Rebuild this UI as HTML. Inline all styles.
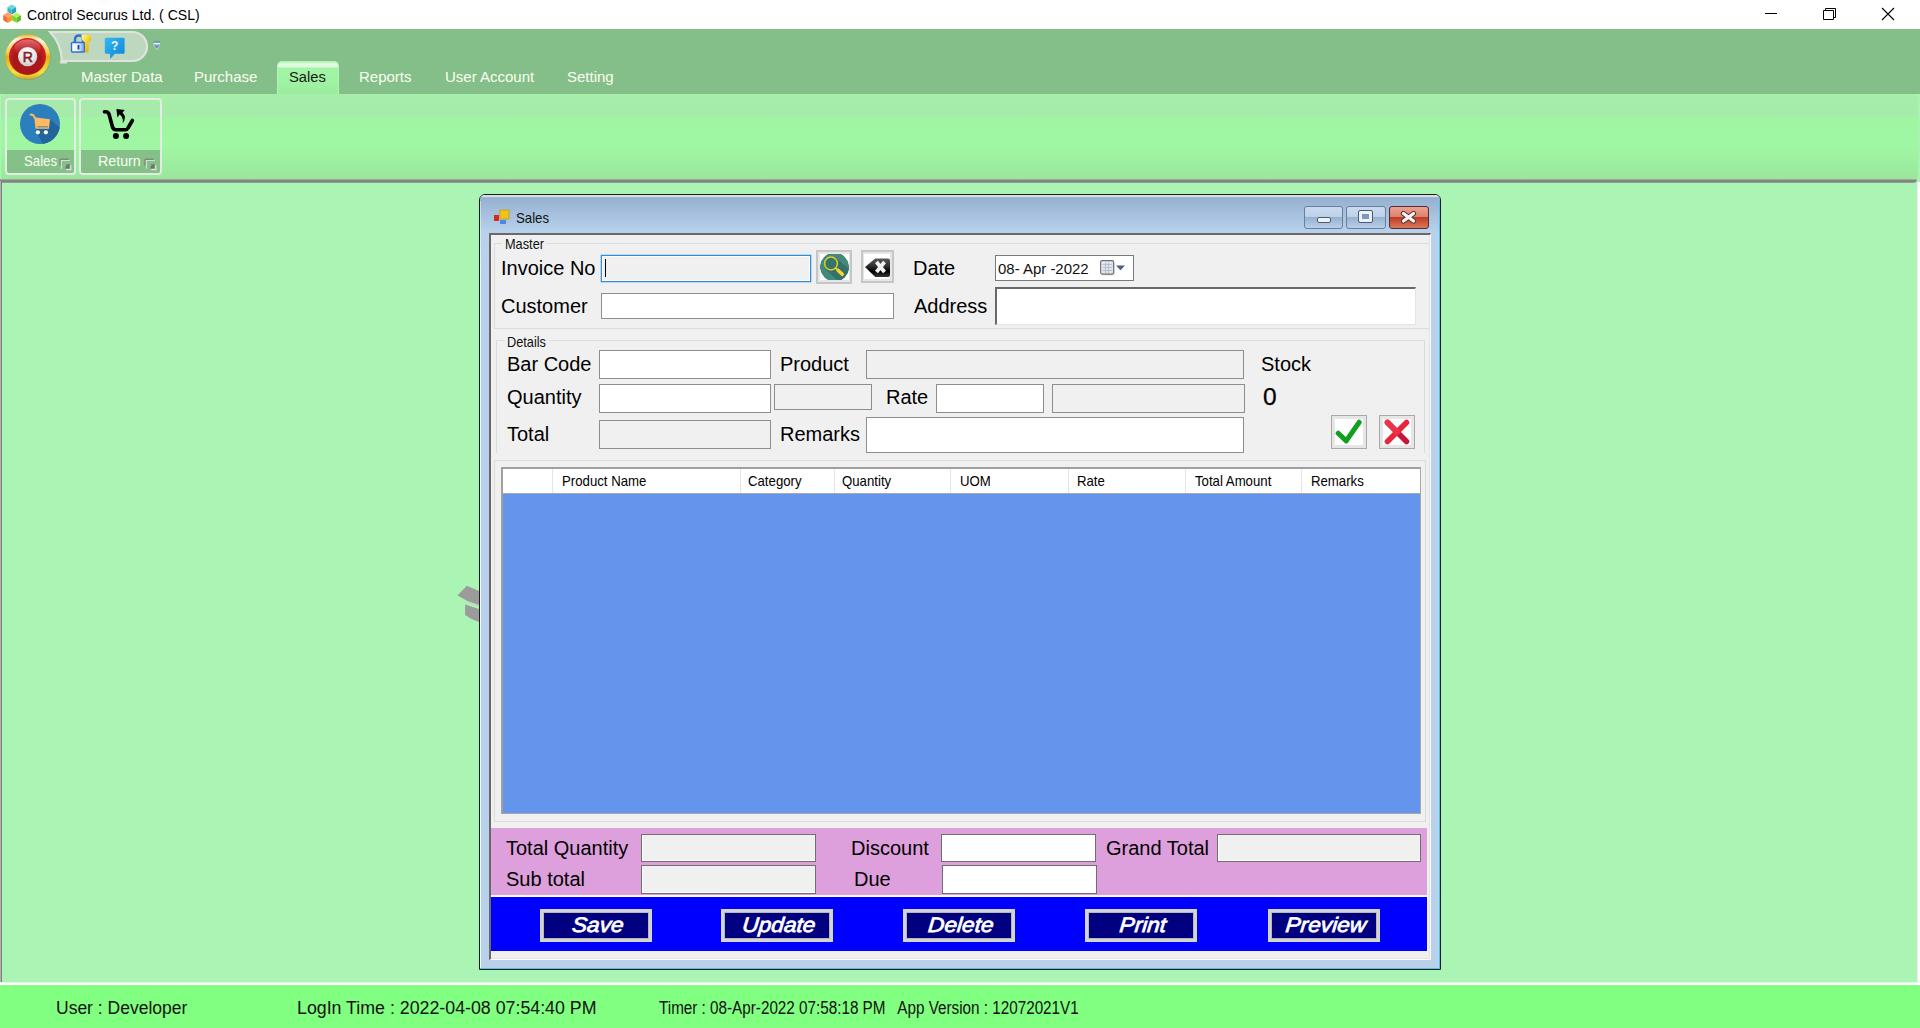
<!DOCTYPE html>
<html><head><meta charset="utf-8">
<style>
*{margin:0;padding:0;box-sizing:border-box}
html,body{width:1920px;height:1028px;overflow:hidden;background:#aaf5b4;font-family:"Liberation Sans",sans-serif;position:relative}
.a{position:absolute}
.t{position:absolute;white-space:pre;line-height:1}
/* textboxes */
.tb{position:absolute;background:#fff;border:1px solid #8e8e8e}
.tbg{position:absolute;background:#f0f0f0;border:1px solid #8e8e8e}
.lbl{position:absolute;white-space:pre;line-height:1;font-size:20px;color:#000}
.hdr{position:absolute;white-space:pre;line-height:1;font-size:15px;color:#000;transform:scaleX(0.88);transform-origin:0 0}
.btn{position:absolute;background:#000080;border:3px solid #d4d4d4;box-shadow:inset 0 0 0 1px #b8b8b8}
.btxt{position:absolute;left:4px;right:0;text-align:center;top:2px;font-size:21px;font-weight:normal;font-style:italic;color:#fff;line-height:1;-webkit-text-stroke:0.75px #fff;transform:skewX(-5deg) scaleX(1.08)}
</style></head><body>

<!-- Title bar -->
<div class="a" style="left:0;top:0;width:1920px;height:29px;background:#fff"></div>
<svg class="a" style="left:0;top:0" width="26" height="28" viewBox="0 0 26 28"><path d="M11.80 4.60 L16.15 7.10 L11.80 9.60 L7.45 7.10Z" fill="#6fd6df"/><path d="M7.45 7.10 L11.80 9.60 L11.80 14.60 L7.45 12.10Z" fill="#3bb9c6"/><path d="M11.80 9.60 L16.15 7.10 L16.15 12.10 L11.80 14.60Z" fill="#2aa3b4"/><path d="M7.80 12.30 L12.41 14.95 L7.80 17.60 L3.19 14.95Z" fill="#ffa070"/><path d="M3.19 14.95 L7.80 17.60 L7.80 22.90 L3.19 20.25Z" fill="#f56a3a"/><path d="M7.80 17.60 L12.41 14.95 L12.41 20.25 L7.80 22.90Z" fill="#f0a01e"/><path d="M16.60 12.80 L20.95 15.30 L16.60 17.80 L12.25 15.30Z" fill="#b9ee60"/><path d="M12.25 15.30 L16.60 17.80 L16.60 22.80 L12.25 20.30Z" fill="#7fd12a"/><path d="M16.60 17.80 L20.95 15.30 L20.95 20.30 L16.60 22.80Z" fill="#5fbf1a"/></svg>
<div class="t" style="left:27px;top:8px;font-size:14.5px;color:#000;transform:scaleX(0.97);transform-origin:0 0">Control Securus Ltd. ( CSL)</div>
<svg class="a" style="left:1760px;top:6px" width="140" height="18" viewBox="0 0 140 18">
  <path d="M5 7.5 H17" stroke="#000" stroke-width="1"/>
  <path d="M63.5 4.5 H73.5 V13.5 H63.5Z" fill="none" stroke="#000" stroke-width="1"/>
  <path d="M65.5 4.5 V2.5 H75.5 V11.5 H73.5" fill="none" stroke="#000" stroke-width="1"/>
  <path d="M122 2 L134 14 M134 2 L122 14" stroke="#000" stroke-width="1.1"/>
</svg>

<!-- Ribbon top -->
<div class="a" style="left:0;top:29px;width:1920px;height:65px;background:#84be89"></div>

<!-- Orb -->
<svg class="a" style="left:3px;top:32px" width="50" height="50" viewBox="0 0 50 50">
  <defs>
    <linearGradient id="gold" x1="0" y1="0" x2="0" y2="1">
      <stop offset="0" stop-color="#e6b21a"/><stop offset="0.12" stop-color="#fff6d8"/><stop offset="0.4" stop-color="#f2d24a"/><stop offset="0.5" stop-color="#e2ae18"/><stop offset="0.85" stop-color="#f7e23a"/><stop offset="1" stop-color="#d9a515"/>
    </linearGradient>
    <radialGradient id="red" cx="0.5" cy="0.6" r="0.6">
      <stop offset="0" stop-color="#b01c1c"/><stop offset="0.6" stop-color="#a8161a"/><stop offset="1" stop-color="#e0252a"/>
    </radialGradient>
    <linearGradient id="hl" x1="0" y1="0" x2="0" y2="1">
      <stop offset="0" stop-color="#e06a6e"/><stop offset="1" stop-color="#c94a50" stop-opacity="0"/>
    </linearGradient>
    <radialGradient id="wh" cx="0.5" cy="0.3" r="0.7">
      <stop offset="0" stop-color="#ffffff"/><stop offset="0.6" stop-color="#e8e8e8"/><stop offset="1" stop-color="#c8c8c8"/>
    </radialGradient>
  </defs>
  <circle cx="25" cy="25.5" r="22.8" fill="#6f9a78" opacity="0.5"/>
  <circle cx="24.7" cy="24.8" r="22.5" fill="url(#gold)"/>
  <circle cx="24.5" cy="24.5" r="18.5" fill="url(#red)"/>
  <ellipse cx="24.5" cy="16" rx="13" ry="8.5" fill="url(#hl)"/>
  <circle cx="24.6" cy="24.6" r="9.6" fill="url(#wh)"/>
  <text x="24.8" y="29.6" font-size="14" font-weight="normal" stroke="#8b2028" stroke-width="0.6" fill="#8b2028" text-anchor="middle" font-family="Liberation Sans">R</text>
</svg>

<!-- QAT -->
<svg class="a" style="left:45px;top:28px" width="120" height="40" viewBox="45 28 120 40">
  <path d="M50 32 H132.5 A14.5 14.5 0 0 1 132.5 61 H62 Q61 43 50 32 Z" fill="#bdd8be" stroke="#e0e3e0" stroke-width="2.2"/>
  <rect x="60" y="60.5" width="7" height="3" fill="#e0e3e0"/>
  <defs>
    <linearGradient id="lockb" x1="0" y1="0" x2="1" y2="0"><stop offset="0" stop-color="#ffffff"/><stop offset="0.55" stop-color="#dfeefe"/><stop offset="1" stop-color="#5d9cf0"/></linearGradient>
    <linearGradient id="keyg" x1="0" y1="0" x2="1" y2="1"><stop offset="0" stop-color="#fff7b0"/><stop offset="0.5" stop-color="#f7cf1a"/><stop offset="1" stop-color="#e89a00"/></linearGradient>
  </defs>
  <path d="M75 43 V40 Q75 35.5 79 35.5 Q83 35.5 83 40 V43" fill="none" stroke="#2f6fd6" stroke-width="2.4"/>
  <rect x="71.5" y="42.5" width="13" height="9.5" rx="1" fill="url(#lockb)" stroke="#2f6fd6" stroke-width="1.4"/>
  <rect x="77.6" y="45" width="1.8" height="4.5" fill="#1f3f9a"/>
  <path d="M81.5 35 H91 V40.5 Q89.5 42 88.5 42 V52.5 H85 V42 Q82 41 81.5 38 Z" fill="url(#keyg)"/>
</svg>
<svg class="a" style="left:104px;top:37px" width="22" height="23" viewBox="0 0 22 23">
  <defs><linearGradient id="hg" x1="0" y1="0" x2="1" y2="1"><stop offset="0" stop-color="#35b8f0"/><stop offset="1" stop-color="#0c84da"/></linearGradient></defs>
  <path d="M2.2 0.8 H19.2 Q20.6 0.8 20.6 2.2 V15.4 Q20.6 16.8 19.2 16.8 H10.8 L6.3 21.9 L5.9 16.8 H2.2 Q0.8 16.8 0.8 15.4 V2.2 Q0.8 0.8 2.2 0.8Z" fill="url(#hg)"/>
  <text x="10.7" y="13.2" font-size="12" font-weight="bold" fill="#f4f8ff" text-anchor="middle" font-family="Liberation Sans">?</text>
</svg>
<svg class="a" style="left:152px;top:40px" width="10" height="12" viewBox="0 0 10 12">
  <rect x="1.6" y="1.2" width="6.4" height="1.7" fill="#6c8cc8"/>
  <rect x="1.6" y="2.9" width="6.4" height="1.4" fill="#eef6ee"/>
  <path d="M1.3 5.2 H8.3 L4.8 9.8Z" fill="#eef6ee"/>
  <path d="M1.6 5.2 H8 L4.8 9Z" fill="#6c8cc8"/>
</svg>

<!-- Tabs -->
<div class="t" style="left:81px;top:69px;font-size:15px;color:#fbfff0">Master Data</div>
<div class="t" style="left:194px;top:69px;font-size:15px;color:#fbfff0">Purchase</div>
<div class="a" style="left:277px;top:61px;width:62px;height:34px;border-radius:5px 5px 0 0;background:linear-gradient(#b8f8b8 0,#e2fde2 2px,#def9de 5px,#a2f5a4 6px,#a0f3a2 60%,#9aeb9c 100%);border:1px solid #aef7b0;border-bottom:none"></div>
<div class="t" style="left:289px;top:69px;font-size:15.5px;color:#1b1b1b;transform:scaleX(0.95);transform-origin:0 0">Sales</div>
<div class="t" style="left:359px;top:69px;font-size:15px;color:#fbfff0">Reports</div>
<div class="t" style="left:445px;top:69px;font-size:15px;color:#fbfff0">User Account</div>
<div class="t" style="left:567px;top:69px;font-size:15px;color:#fbfff0">Setting</div>

<!-- Ribbon panel -->
<div class="a" style="left:1918px;top:94px;width:2px;height:90px;background:#a9f3b2"></div>
<div class="a" style="left:1px;top:94px;width:1917px;height:86px;border-radius:3px 4px 4px 0;background:linear-gradient(#a7eeaa 0,#a6eba9 21px,#a0f4a3 23px,#a0f8a3 50px,#9ae69d 100%)"></div>
<div class="a" style="left:0;top:179px;width:1917px;height:4px;border-radius:0 0 4px 0;background:linear-gradient(#a3c8a5 0,#8c8c8c 25%,#7f7f7f 60%,#9aa99b 100%)"></div>

<!-- Ribbon group Sales -->
<div class="a" style="left:5px;top:98px;width:71px;height:77px;border:2px solid #e2ece2;border-radius:4px;background:linear-gradient(#a6eba9 0,#a6eba9 16px,#a0f4a3 18px,#a0f8a3 100%)"></div>
<div class="a" style="left:7px;top:150px;width:67px;height:23px;background:#85c089;border-radius:0 0 2px 2px"></div>
<svg class="a" style="left:15px;top:100px" width="50" height="50" viewBox="0 0 50 50">
  <defs><clipPath id="cc"><circle cx="25" cy="24" r="20"/></clipPath></defs>
  <circle cx="25" cy="24" r="20" fill="#2b7fbd"/>
  <path d="M35 19.5 L50 32 L50 50 L31 50 L22 33 L21 28.7 L33.8 28.7Z" fill="#22659a" clip-path="url(#cc)"/>
  <path d="M15.5 14.5 Q19 14.6 19.5 17.5" fill="none" stroke="#fdb964" stroke-width="2" stroke-linecap="round"/>
  <path d="M19.3 17.3 L35 19.2 L33.9 28.8 L20.5 28.8Z" fill="#fdb964"/>
  <rect x="22.5" y="26" width="10.5" height="1.5" fill="#8f8f80"/>
  <circle cx="22.9" cy="32.3" r="2.1" fill="#fff"/><circle cx="30.9" cy="32.3" r="2.1" fill="#fff"/>
</svg>
<div class="t" style="left:24px;top:153px;font-size:15px;color:#fbfff0;transform:scaleX(0.88);transform-origin:0 0">Sales</div>
<svg class="a" style="left:59px;top:158px" width="13" height="13" viewBox="0 0 13 13"><path d="M1.06 7.8 V1.2 H9.66" fill="none" stroke="#747474" stroke-width="1"/><path d="M2.4 10.7 V2.5 H10.8" fill="none" stroke="#d6dcd6" stroke-width="1.2"/><path d="M6.6 6.4 L10.6 6.3 L10.6 10.5 L6.3 10.5 L6.5 8.5 L7.6 7.5Z" fill="#727272"/><path d="M7.2 11.6 H11.8 V7.2" fill="none" stroke="#dde4dd" stroke-width="1.2"/></svg>

<!-- Ribbon group Return -->
<div class="a" style="left:79px;top:98px;width:83px;height:77px;border:2px solid #e2ece2;border-radius:4px;background:linear-gradient(#a6eba9 0,#a6eba9 16px,#a0f4a3 18px,#a0f8a3 100%)"></div>
<div class="a" style="left:81px;top:150px;width:79px;height:23px;background:#85c089;border-radius:0 0 2px 2px"></div>
<svg class="a" style="left:95px;top:100px" width="50" height="50" viewBox="0 0 50 50">
  <path d="M9.5 11.8 Q13 11.5 14 14 L17.5 27 Q18.3 29.8 21 29.8 L30.5 29.8 Q32 29.8 33 28 L37.4 20.5" fill="none" stroke="#000" stroke-width="3.6" stroke-linecap="round" stroke-linejoin="round"/>
  <circle cx="20.9" cy="36" r="3" fill="#000"/><circle cx="31.1" cy="36" r="3" fill="#000"/>
  <path d="M21.4 9 L29.8 10 L27.5 12.5 Q30.5 15.5 29.8 18.5 Q29.3 21.5 27.7 23.5 Q28.3 19 26.7 16.5 Q25.5 15 24.5 14.6 L22.4 17.5Z" fill="#000"/>
</svg>
<div class="t" style="left:98px;top:153px;font-size:15px;color:#fbfff0;transform:scaleX(0.95);transform-origin:0 0">Return</div>
<svg class="a" style="left:144px;top:158px" width="13" height="13" viewBox="0 0 13 13"><path d="M1.06 7.8 V1.2 H9.66" fill="none" stroke="#747474" stroke-width="1"/><path d="M2.4 10.7 V2.5 H10.8" fill="none" stroke="#d6dcd6" stroke-width="1.2"/><path d="M6.6 6.4 L10.6 6.3 L10.6 10.5 L6.3 10.5 L6.5 8.5 L7.6 7.5Z" fill="#727272"/><path d="M7.2 11.6 H11.8 V7.2" fill="none" stroke="#dde4dd" stroke-width="1.2"/></svg>

<!-- MDI left border -->
<div class="a" style="left:0;top:181px;width:2px;height:802px;background:linear-gradient(90deg,#b0b0b0 0,#b0b0b0 50%,#7f7f7f 50%,#7f7f7f 100%)"></div>
<div class="a" style="left:1917px;top:182px;width:3px;height:801px;background:linear-gradient(90deg,#d8e8d8 0,#fff 40%,#fff 100%)"></div>
<!-- status bar -->
<div class="a" style="left:0;top:982px;width:1920px;height:3px;background:linear-gradient(#dde8dd 0,#fff 40%,#fff 100%)"></div>
<div class="a" style="left:0;top:985px;width:1920px;height:43px;background:#80ff80"></div>
<div class="t" style="left:56px;top:1000px;font-size:17.5px;color:#111">User : Developer</div>
<div class="t" style="left:297px;top:1000px;font-size:17.5px;color:#111;transform:scaleX(1.016);transform-origin:0 0">LogIn Time : 2022-04-08 07:54:40 PM</div>
<div class="t" style="left:659px;top:1000px;font-size:17.5px;color:#111;transform:scaleX(0.871);transform-origin:0 0">Timer : 08-Apr-2022 07:58:18 PM   App Version : 12072021V1</div>

<!-- background hidden icon -->
<svg class="a" style="left:456px;top:584px" width="24" height="40" viewBox="0 0 24 40">
  <path d="M1.5 11.6 L10.9 1.7 L23 7 L23 21 L11.4 16.9Z" fill="#9b9b9b"/>
  <path d="M11.4 17.5 L23 22" stroke="#c8c8c8" stroke-width="1.2"/>
  <path d="M9.1 20.4 L23 25 L23 38 L15.5 35 L9.1 30.9Z" fill="#9b9b9b"/>
</svg>

<!-- ============ DIALOG ============ -->
<div class="a" style="left:479px;top:194px;width:962px;height:776px;border:1px solid #1d1d1d;border-radius:6px 6px 0 0;background:#b9d1ea;box-shadow:inset -1px -1px 0 #45c2ea,inset 1px 0 0 #eef4fa"></div>
<div class="a" style="left:480px;top:195px;width:960px;height:39px;border-radius:5px 5px 0 0;background:linear-gradient(#d5dbe3 0,#d8dee6 2px,#96b1d0 2.6px,#9fb9d8 12px,#b9d2ec 38px)"></div>
<div class="a" style="left:480px;top:234px;width:960px;height:735px;background:#b9d1ea"></div>
<svg class="a" style="left:493px;top:209px" width="17" height="17" viewBox="0 0 17 17">
  <rect x="0.5" y="0.5" width="16" height="16" fill="none" stroke="#c0c8d0" stroke-width="0.6" stroke-dasharray="1 1"/>
  <rect x="7" y="1" width="9" height="9" fill="#f1c21a" stroke="#c99812" stroke-width="0.8"/>
  <rect x="1" y="6" width="5" height="6" fill="#d12b1f"/>
  <rect x="7" y="11" width="6" height="4" fill="#4d86e6"/>
</svg>
<div class="t" style="left:516px;top:211px;font-size:14.5px;color:#111;transform:scaleX(0.91);transform-origin:0 0">Sales</div>
<div class="a" style="left:1439px;top:200px;width:1px;height:769px;background:#4cc3ea"></div>
<div class="a" style="left:480px;top:968px;width:960px;height:1px;background:#4cc3ea"></div>
<div class="a" style="left:480px;top:201px;width:1px;height:767px;background:linear-gradient(#c8d8ea,#f4f8fc 10%,#f4f8fc)"></div>
<!-- title buttons -->
<div class="a" style="left:1304px;top:206px;width:39px;height:23px;border:1px solid #6a7f9c;border-radius:3px;background:linear-gradient(#c8daee 0,#bdd2ea 45%,#98b2d2 50%,#b8cfe8 100%)"></div>
<div class="a" style="left:1317px;top:217px;width:14px;height:6px;border:1px solid #4b5a70;border-radius:2px;background:#eef2f6"></div>
<div class="a" style="left:1346px;top:206px;width:40px;height:23px;border:1px solid #6a7f9c;border-radius:3px;background:linear-gradient(#c8daee 0,#bdd2ea 45%,#98b2d2 50%,#b8cfe8 100%)"></div>
<div class="a" style="left:1359px;top:211px;width:13px;height:11px;border:3px solid #eef2f6;outline:1px solid #4b5a70;border-radius:1px;background:#7c99c0"></div>
<div class="a" style="left:1389px;top:206px;width:40px;height:23px;border:1px solid #5a2a32;border-radius:3px;background:linear-gradient(#e9a391 0,#dc8470 45%,#c13b22 50%,#d77a60 100%)"></div>
<svg class="a" style="left:1399px;top:210px" width="20" height="15" viewBox="0 0 20 15"><path d="M4.5 3.5 L14.5 11 M14.5 3.5 L4.5 11" stroke="#5a3434" stroke-width="5.2" stroke-linecap="round"/><path d="M4.5 3.5 L14.5 11 M14.5 3.5 L4.5 11" stroke="#f4f4f4" stroke-width="3.2" stroke-linecap="round"/></svg>

<!-- client area -->
<div class="a" style="left:489px;top:233px;width:942px;height:727px;background:#f0f0f0;border-top:2px solid #696969;border-left:2px solid #696969;border-right:1px solid #fff;border-bottom:1px solid #fff;box-shadow:inset -1px -1px 0 #e3e3e3"></div>

<!-- Master group -->
<div class="a" style="left:494px;top:243px;width:935px;height:86px;border:1px solid #dcdcdc;border-right:none"></div>
<div class="a" style="left:502px;top:236px;width:44px;height:14px;background:#f0f0f0"></div>
<div class="t" style="left:505px;top:235.5px;font-size:15px;color:#111;transform:scaleX(0.85);transform-origin:0 0">Master</div>

<div class="lbl" style="left:501px;top:258px">Invoice No</div>
<div class="a" style="left:601px;top:255px;width:210px;height:27px;background:#f0f0f0;border:1px solid #2f8ddb;box-shadow:0 0 0 0.4px #6fb0e6,inset 0 0 0 1px #fff"></div>
<div class="a" style="left:605px;top:259px;width:1px;height:18px;background:#000"></div>
<!-- search button -->
<div class="a" style="left:816px;top:250px;width:36px;height:34px;border:2px solid #c6c6c6;background:#e6e6e6"></div>
<svg class="a" style="left:820px;top:254px" width="29" height="26" viewBox="0 0 29 26">
  <defs><clipPath id="sc"><circle cx="14.5" cy="13" r="14.6"/></clipPath></defs>
  <rect x="0" y="0" width="29" height="26" fill="#fff"/>
  <g clip-path="url(#sc)">
    <circle cx="14.5" cy="13" r="14.6" fill="#438a7b"/>
    <path d="M14.5 3 L29 15 L29 26 L17 26 L4.5 14.5 Z" fill="#34716a"/>
      </g>
  <circle cx="11" cy="9.5" r="6.4" fill="#33756a" stroke="#e6cb2c" stroke-width="1.5"/>
  <path d="M18.2 16.5 L22.3 20.3" stroke="#fdd52a" stroke-width="3.6" stroke-linecap="round"/>
  <path d="M15.5 14 L18.5 16.8" stroke="#f2d02a" stroke-width="1.8"/>
</svg>
<!-- clear button -->
<div class="a" style="left:861px;top:250px;width:33px;height:33px;border:2px solid #c6c6c6;background:#e6e6e6"></div>
<svg class="a" style="left:864px;top:254px" width="26" height="25" viewBox="0 0 26 25">
  <defs><linearGradient id="cg" x1="0" y1="0" x2="0" y2="1"><stop offset="0" stop-color="#5a5a5a"/><stop offset="0.45" stop-color="#2a2a2a"/><stop offset="0.7" stop-color="#000"/><stop offset="1" stop-color="#3a3a3a"/></linearGradient></defs>
  <rect x="0" y="0" width="26" height="25" fill="#fff"/>
  <path d="M1 13 L11.2 4.4 H24 Q26 4.4 26 6.4 V21 Q26 23 24 23 H11.2 Z" fill="url(#cg)"/>
  <path d="M12.5 8 L20.5 18 M20.5 8 L12.5 18" stroke="#f2f2f2" stroke-width="3.8"/>
</svg>
<div class="lbl" style="left:913px;top:258px">Date</div>
<div class="a" style="left:995px;top:255px;width:139px;height:26px;background:#fff;border:1px solid #7a7a7a"></div>
<div class="t" style="left:997.5px;top:260.8px;font-size:15.5px;color:#111;transform:scaleX(0.965);transform-origin:0 0">08- Apr -2022</div>
<svg class="a" style="left:1099px;top:259px" width="28" height="17" viewBox="0 0 28 17">
  <rect x="3" y="3" width="13" height="13.5" rx="1.5" fill="#c9c9c9" opacity="0.6"/>
  <rect x="1.6" y="1.6" width="13" height="13.5" rx="1.5" fill="#dfe4ee" stroke="#6f6f6f" stroke-width="1.1"/>
  <path d="M3.5 5.5 H13 M3.5 8.5 H13 M3.5 11.5 H13 M6.5 4 V14 M9.5 4 V14" stroke="#aab3c4" stroke-width="0.7"/>
  <path d="M17 6.5 H26 L21.5 11.2Z" fill="#4a5f82"/>
</svg>

<div class="lbl" style="left:501px;top:296px">Customer</div>
<div class="tb" style="left:601px;top:293px;width:293px;height:26px"></div>
<div class="lbl" style="left:914px;top:296px">Address</div>
<div class="a" style="left:995px;top:287px;width:421px;height:38px;background:#fff;border-top:2px solid #696969;border-left:2px solid #696969;border-right:1px solid #e3e3e3;border-bottom:1px solid #e3e3e3"></div>

<!-- Details group -->
<div class="a" style="left:496px;top:340px;width:929px;height:113px;border:1px solid #dcdcdc;border-bottom:none"></div>
<div class="a" style="left:504px;top:333px;width:46px;height:14px;background:#f0f0f0"></div>
<div class="t" style="left:507px;top:333.5px;font-size:15px;color:#111;transform:scaleX(0.85);transform-origin:0 0">Details</div>

<div class="lbl" style="left:507px;top:354px">Bar Code</div>
<div class="tb" style="left:599px;top:350px;width:172px;height:29px"></div>
<div class="lbl" style="left:780px;top:354px">Product</div>
<div class="tbg" style="left:866px;top:350px;width:378px;height:29px"></div>
<div class="lbl" style="left:1261px;top:354px">Stock</div>

<div class="lbl" style="left:507px;top:387px">Quantity</div>
<div class="tb" style="left:599px;top:384px;width:172px;height:29px"></div>
<div class="tbg" style="left:774px;top:384px;width:98px;height:26px"></div>
<div class="lbl" style="left:886px;top:387px">Rate</div>
<div class="tb" style="left:936px;top:384px;width:108px;height:29px"></div>
<div class="tbg" style="left:1052px;top:384px;width:193px;height:29px"></div>
<div class="t" style="left:1263px;top:384.5px;font-size:24.5px;color:#000;-webkit-text-stroke:0.25px #000">0</div>

<div class="lbl" style="left:507px;top:424px">Total</div>
<div class="tbg" style="left:599px;top:420px;width:172px;height:29px"></div>
<div class="lbl" style="left:780px;top:424px">Remarks</div>
<div class="tb" style="left:866px;top:417px;width:378px;height:36px"></div>

<!-- check / cross buttons -->
<div class="a" style="left:1331px;top:415px;width:36px;height:34px;border:1px solid #a9a9a9;background:#fff;box-shadow:inset 0 0 0 3px #e6e6e6"></div>
<svg class="a" style="left:1335px;top:419px" width="28" height="26" viewBox="0 0 28 26">
  <path d="M3.2 14.2 L11.2 21.9 L24.2 3.2" fill="none" stroke="#129e1e" stroke-width="5" stroke-linecap="round" stroke-linejoin="round"/>
</svg>
<div class="a" style="left:1379px;top:415px;width:36px;height:34px;border:1px solid #a9a9a9;background:#fff;box-shadow:inset 0 0 0 3px #e6e6e6"></div>
<svg class="a" style="left:1382px;top:418px" width="30" height="28" viewBox="0 0 30 28">
  <path d="M5.5 4.5 L24.5 23.5" stroke="#c4173a" stroke-width="5.6" stroke-linecap="round"/>
  <path d="M24.5 4.5 L5.5 23.5" stroke="#e8283a" stroke-width="5.6" stroke-linecap="round"/>
  <path d="M5.5 4.5 L15 14" stroke="#ea3448" stroke-width="5.6" stroke-linecap="round"/>
</svg>

<!-- Grid panel -->
<div class="a" style="left:494px;top:460px;width:932px;height:362px;border:1px solid #dcdcdc"></div>
<div class="a" style="left:501px;top:467px;width:920px;height:347px;background:#6495ed;border-top:2px solid #a0a0a0;border-left:2px solid #a0a0a0;border-right:1px solid #a8a8a8;border-bottom:1px solid #a8a8a8"></div>
<div class="a" style="left:503px;top:469px;width:917px;height:24px;background:#fff"></div>
<div class="a" style="left:503px;top:493px;width:917px;height:1px;background:#a9a9a9"></div>
<div class="a" style="left:552px;top:469px;width:1px;height:24px;background:#e5e5e5"></div>
<div class="a" style="left:740px;top:469px;width:1px;height:24px;background:#e5e5e5"></div>
<div class="a" style="left:834px;top:469px;width:1px;height:24px;background:#e5e5e5"></div>
<div class="a" style="left:950px;top:469px;width:1px;height:24px;background:#e5e5e5"></div>
<div class="a" style="left:1068px;top:469px;width:1px;height:24px;background:#e5e5e5"></div>
<div class="a" style="left:1185px;top:469px;width:1px;height:24px;background:#e5e5e5"></div>
<div class="a" style="left:1301px;top:469px;width:1px;height:24px;background:#e5e5e5"></div>
<div class="hdr" style="left:562px;top:473px">Product Name</div>
<div class="hdr" style="left:748px;top:473px">Category</div>
<div class="hdr" style="left:842px;top:473px">Quantity</div>
<div class="hdr" style="left:960px;top:473px">UOM</div>
<div class="hdr" style="left:1077px;top:473px">Rate</div>
<div class="hdr" style="left:1195px;top:473px">Total Amount</div>
<div class="hdr" style="left:1311px;top:473px">Remarks</div>

<!-- Pink panel -->
<div class="a" style="left:491px;top:828px;width:936px;height:67px;background:#dda0dd"></div>
<div class="a" style="left:491px;top:895px;width:936px;height:2px;background:#fafafa"></div>
<div class="lbl" style="left:506px;top:838px">Total Quantity</div>
<div class="tbg" style="left:641px;top:834px;width:175px;height:28px;border-color:#707070;box-shadow:inset 1px -1px 0 #fff"></div>
<div class="lbl" style="left:506px;top:869px">Sub total</div>
<div class="tbg" style="left:641px;top:865px;width:175px;height:29px;border-color:#707070;box-shadow:inset 1px -1px 0 #fff"></div>
<div class="lbl" style="left:851px;top:838px">Discount</div>
<div class="tb" style="left:941px;top:834px;width:155px;height:28px;border-color:#707070"></div>
<div class="lbl" style="left:854px;top:869px">Due</div>
<div class="tb" style="left:942px;top:865px;width:155px;height:29px;border-color:#707070"></div>
<div class="lbl" style="left:1106px;top:838px">Grand Total</div>
<div class="tbg" style="left:1217px;top:834px;width:204px;height:28px;border-color:#707070;box-shadow:inset 1px -1px 0 #fff"></div>

<!-- Blue button bar -->
<div class="a" style="left:491px;top:897px;width:936px;height:54px;background:#0000ff"></div>
<div class="btn" style="left:540px;top:909px;width:112px;height:33px"><div class="btxt">Save</div></div>
<div class="btn" style="left:721px;top:909px;width:112px;height:33px"><div class="btxt">Update</div></div>
<div class="btn" style="left:903px;top:909px;width:112px;height:33px"><div class="btxt">Delete</div></div>
<div class="btn" style="left:1085px;top:909px;width:112px;height:33px"><div class="btxt">Print</div></div>
<div class="btn" style="left:1268px;top:909px;width:112px;height:33px"><div class="btxt">Preview</div></div>

</body></html>
